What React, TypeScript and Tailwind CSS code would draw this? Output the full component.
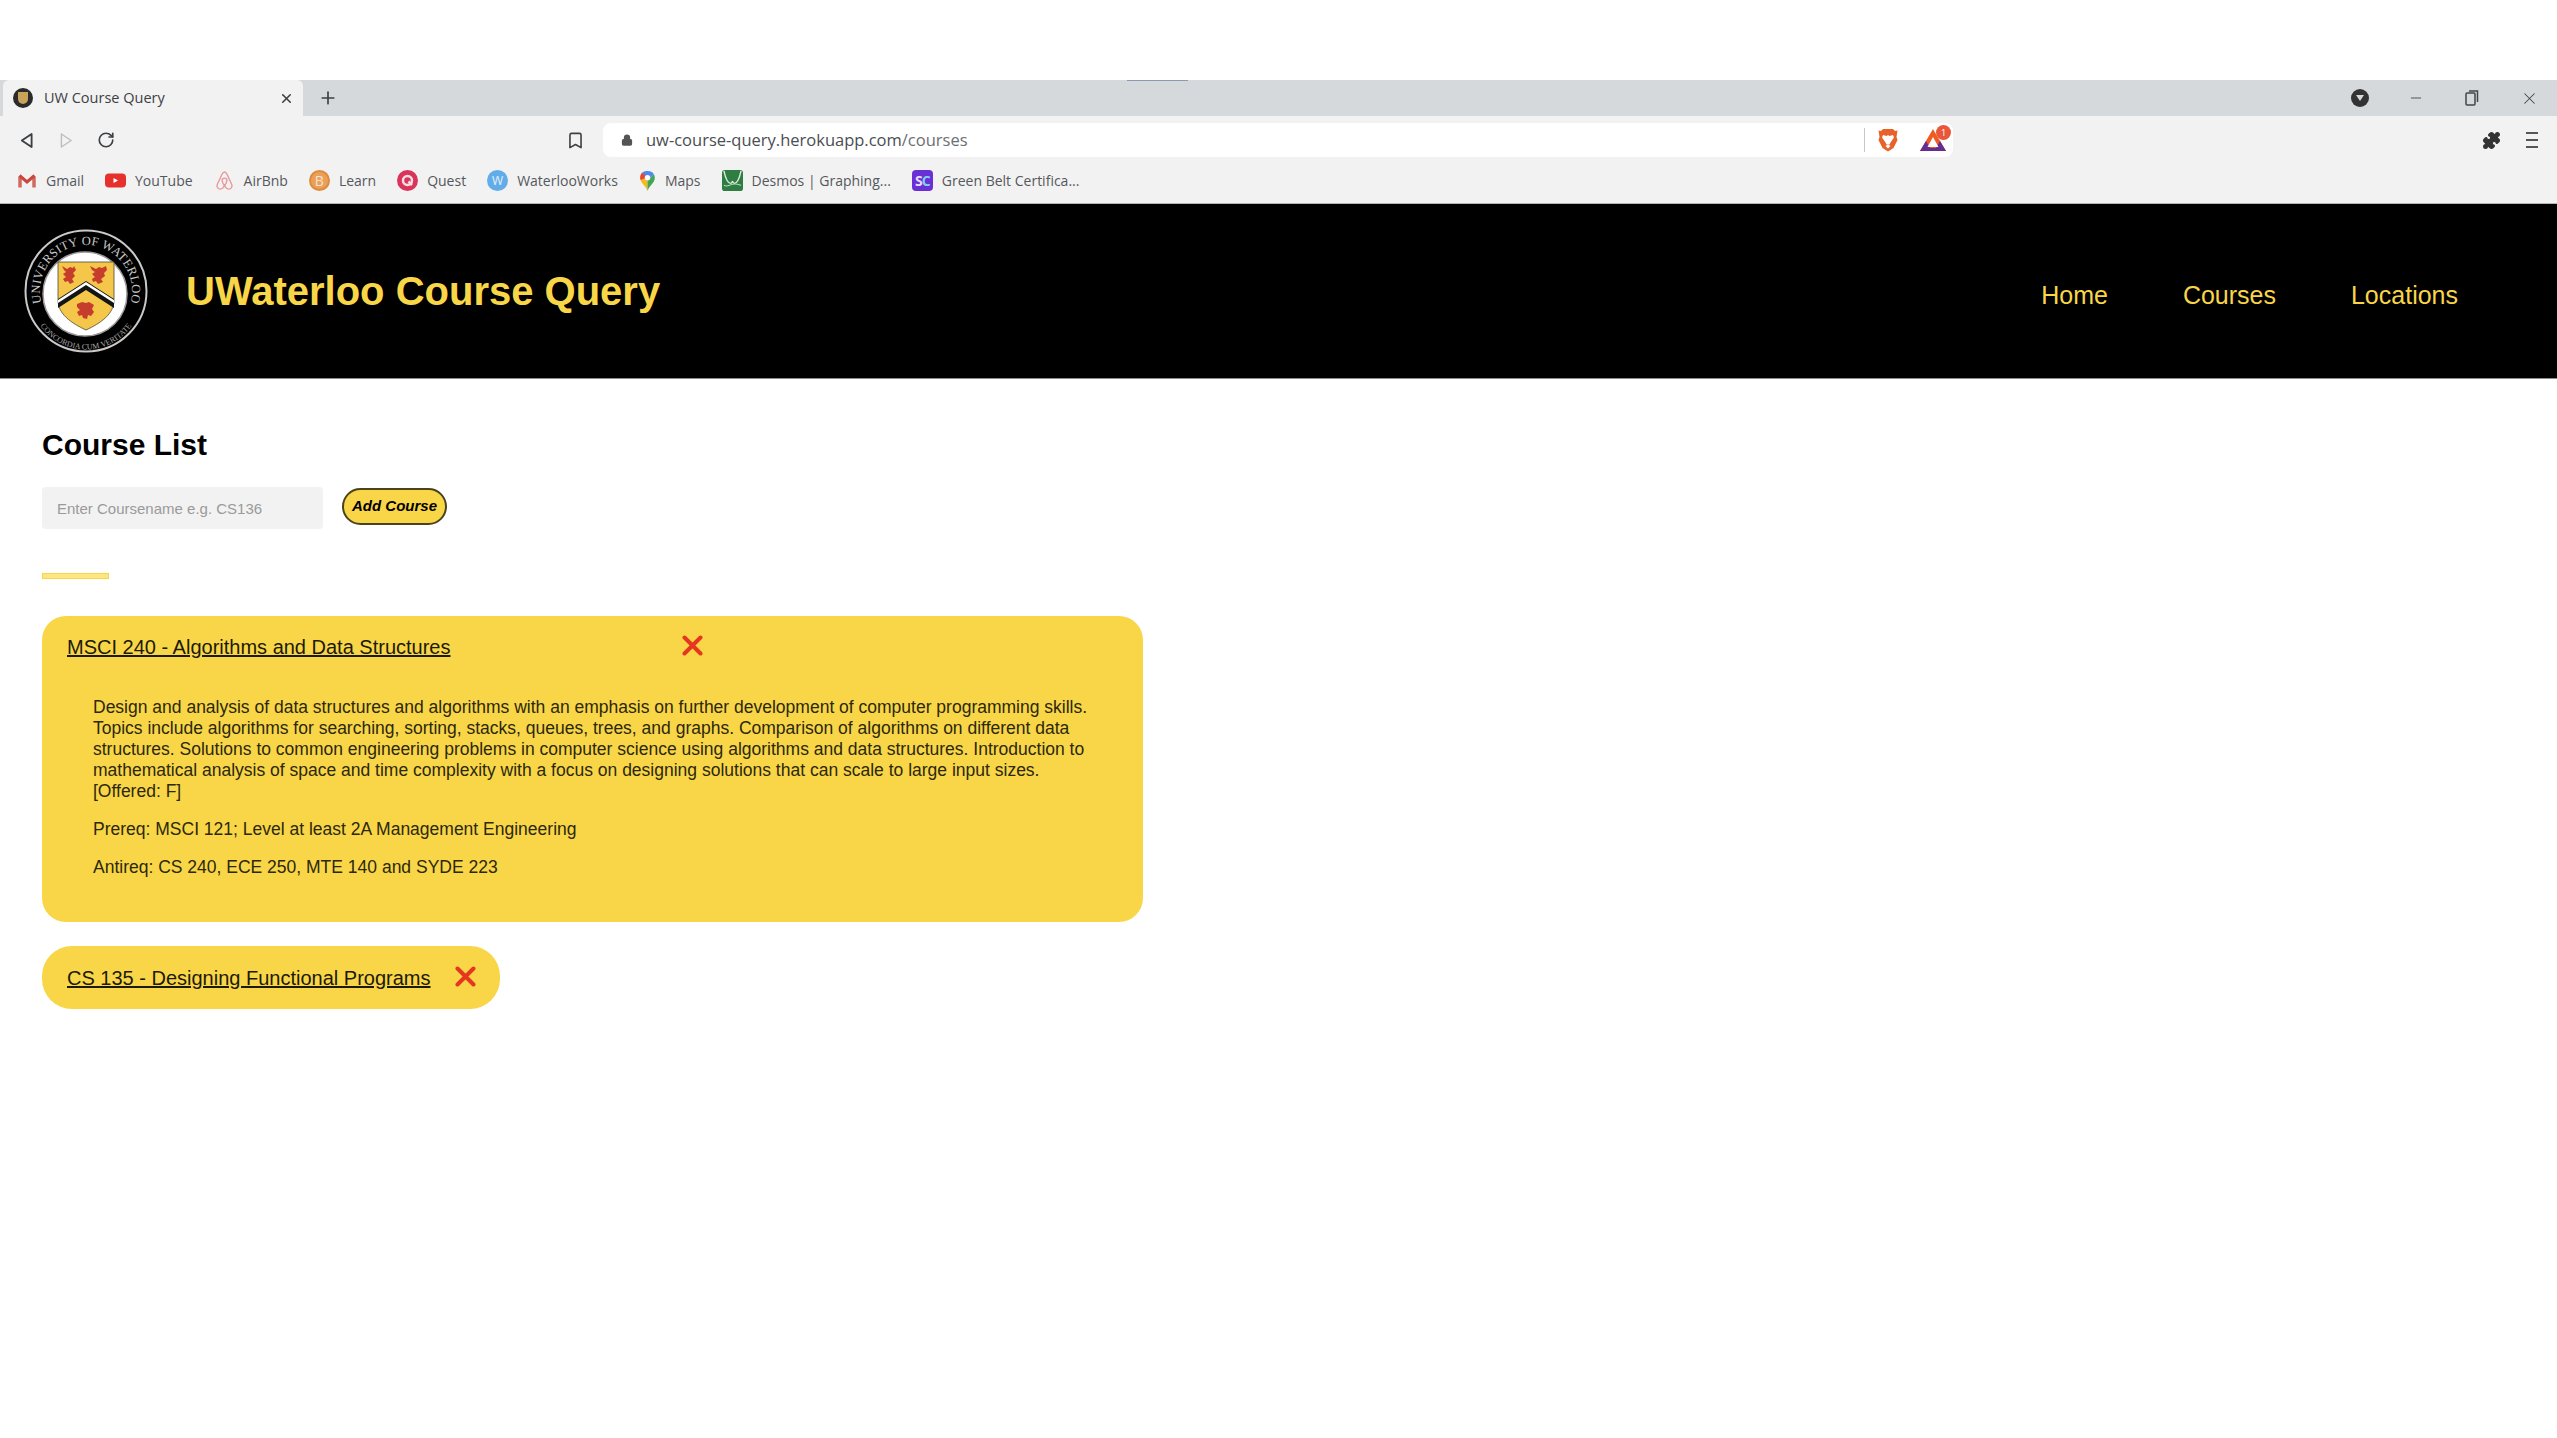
import { Minus, Plus, Puzzle, RotateCw, Bookmark, Lock, X } from "lucide-react";

const sans = "font-['Liberation_Sans',Arial,sans-serif]";
const chrome = "font-['Open_Sans','Noto_Sans',sans-serif]";

const Gmail = () => (
  <svg viewBox="0 0 20 20" className="size-[20px]" fill="none">
    <path d="M3 16.500V5.500" stroke="#cf6a60" strokeWidth="3.500" />
    <path d="M17 16.500V5.500" stroke="#cf6a60" strokeWidth="3.500" />
    <path d="M2.500 4.500l7.500 6.500 7.500-6.500" stroke="#c9473d" strokeWidth="3" />
  </svg>
);

const YouTube = () => (
  <svg viewBox="0 0 21 20" className="size-[21px]">
    <rect x="0" y="3" width="21" height="14" rx="4" fill="#e6302b" />
    <path d="M8.500 7.500l4.500 2.500-4.500 2.500z" fill="#fff" />
  </svg>
);

const Airbnb = () => (
  <svg viewBox="0 0 21 22" className="size-[21px]" fill="none" stroke="#e99a9c" strokeWidth="1.500">
    <path d="M10.500 2c-1.200 0-1.900 1-2.600 2.500L3 15c-1 2.300.3 5 2.900 5 2 0 3.500-1.500 4.600-3.500 1.100 2 2.600 3.500 4.600 3.500 2.600 0 3.900-2.700 2.900-5L13.100 4.500C12.400 3 11.700 2 10.500 2z" />
    <path d="M10.500 16.500C9 14.500 8 12.500 8 11c0-1.500 1-2.500 2.500-2.500S13 9.500 13 11c0 1.500-1 3.500-2.500 5.500z" />
  </svg>
);

const Learn = () => (
  <div className="flex size-[21px] items-center justify-center rounded-full border-[2px] border-[#e08a3a] bg-[#e9a05a] text-[14px] leading-none text-[#fbe3c8]">
    B
  </div>
);

const Quest = () => (
  <svg viewBox="0 0 21 21" className="size-[21px]">
    <circle cx="10.500" cy="10.500" r="10.500" fill="#d9355a" />
    <circle cx="10.500" cy="10.500" r="4.500" fill="none" stroke="#f7dfe4" strokeWidth="2.500" />
    <path d="M11.500 11.500l3.500 3.500" stroke="#f7dfe4" strokeWidth="2.500" />
  </svg>
);

const Works = () => (
  <div className="flex size-[21px] items-center justify-center rounded-full bg-[#62ade9] text-[12px] leading-none text-[#e4f1fb]">
    W
  </div>
);

const Maps = () => (
  <svg viewBox="0 0 18 24" className="h-[22px] w-[17px]">
    <path d="M9 23C7 17 1 14 1 8.500 1 4 4.600 1 9 1z" fill="#f6bb16" />
    <path d="M9 23c2-6 8-9 8-14.500 0-1.400-.4-2.800-1-4L9 12z" fill="#45a554" />
    <path d="M3 3a8 8 0 0 1 6-2 8 8 0 0 1 7 3.500L9 12z" fill="#4b8bf0" />
    <path d="M3 3C1.800 4.500 1 6.400 1 8.500c0 1 .2 1.800.5 2.500L9 8z" fill="#e5473a" />
    <circle cx="9" cy="8.500" r="3" fill="#fff" />
  </svg>
);

const Desmos = () => (
  <svg viewBox="0 0 22 22" className="size-[21px]">
    <rect width="22" height="22" rx="3" fill="#2f7d42" />
    <path d="M2 1c2 9 4 13 7 13 1.500 0 1.500-2 2-2s.5 2 2 2c3 0 5-4 7-13" fill="none" stroke="#d8ecd8" strokeWidth="1.500" />
    <path d="M2 16c3 2 5 0 9-1s6 0 9 1" fill="none" stroke="#b7d9bd" strokeWidth="1.200" />
  </svg>
);

const GreenBelt = () => (
  <div className="flex h-[21px] w-[21px] items-center justify-center rounded-[4px] bg-[#6b2fd6] text-[14px] font-bold leading-none tracking-[-1px] text-[#e3dcfb]">
    <span>S</span>
    <span className="text-[#7fd0ee]">C</span>
  </div>
);

const Brave = () => (
  <svg viewBox="0 0 20 24" className="h-[24px] w-[20px]">
    <path d="M5 1h10l2 2 2.500-.500L18.500 9l1 3-4 8-5.500 3.500L4.500 20l-4-8 1-3L.500 2.500 3 3z" fill="#e8622a" />
    <path d="M5 7l3.500 1L10 7l1.500 1L15 7l1 2.500-3.500 5-1 2h-3l-1-2L4 9.500z" fill="#fff" />
    <path d="M7.500 18l2.500-1.500 2.500 1.500L10 20.500z" fill="#fff" />
  </svg>
);

const Bat = () => (
  <div className="relative h-[26px] w-[28px]">
    <svg viewBox="0 0 28 26" className="size-full">
      <path d="M14 2L1 24h26z" fill="#f15a22" />
      <path d="M1 24l6-10 4 7h6l4-7 6 10z" fill="#662d91" />
      <path d="M14 10l-5.500 10h11z" fill="#fff" />
    </svg>
    <div className="absolute right-[-4px] top-[-2px] flex size-[15px] items-center justify-center rounded-full bg-[#e9573a] text-[9px] leading-none text-white">
      1
    </div>
  </div>
);

const Seal = () => (
  <svg viewBox="0 0 124 124" className="size-[124px] shrink-0">
    <defs>
      <path id="sealTop" d="M25 89.300A46 46 0 1 1 99 89.300" />
      <path id="sealBottom" d="M7 75a56 56 0 0 0 110 0" />
    </defs>
    <circle cx="62" cy="62" r="60.500" fill="#000" stroke="#c9c9c9" strokeWidth="2" />
    <circle cx="61" cy="65" r="42" fill="#fff" stroke="#9a9a9a" strokeWidth="1.500" />
    <text fill="#c8c8c8" fontFamily="Liberation Serif, serif" fontSize="12.500" letterSpacing="0.200">
      <textPath href="#sealTop" startOffset="50%" textAnchor="middle">UNIVERSITY OF WATERLOO</textPath>
    </text>
    <text fill="#a5a5a5" fontFamily="Liberation Serif, serif" fontSize="8">
      <textPath href="#sealBottom" startOffset="50%" textAnchor="middle">CONCORDIA CUM VERITATE</textPath>
    </text>
    <path d="M34 33h56v38c0 14-13 23-28 30-15-7-28-16-28-30z" fill="#f4c64a" stroke="#4a4a35" strokeWidth="0.800" />
    <path d="M38 37l5 3 3-2 3 1 1-2 2 4-3 3 2 3-3 3 2 3-4 2-2-3-3 1-2-3 3-2-3-3 3-2-2-2zM66 37l6 3 3-2 3 1 4-2 1 4-3 3 1 3-4 3 2 3-5 2-2-3-3 1-1-3 3-2-3-3 3-2-3-2zM53 75l5-2 4 1 3-1 5 3-2 4 2 3-3 4-3-1-1 4-4-1-1-3-3 1-2-4 3-2-3-3z" fill="#c63d2c" />
    <path d="M34 70l28-18 28 18v9L62 61 34 79z" fill="#141414" />
    <path d="M34 74l28-18 28 18v-3L62 53 34 71z" fill="#fff" />
  </svg>
);

const CloseMark = ({ className = "" }: { className?: string }) => (
  <svg viewBox="0 0 21 21" className={`size-[21px] shrink-0 ${className}`} fill="none" stroke="#e5371f" strokeWidth="4" strokeLinecap="round">
    <path d="M2.500 2.500l16 16M18.500 2.500l-16 16" />
  </svg>
);

const bookmarks = [
  { label: "Gmail", icon: <Gmail /> },
  { label: "YouTube", icon: <YouTube /> },
  { label: "AirBnb", icon: <Airbnb /> },
  { label: "Learn", icon: <Learn /> },
  { label: "Quest", icon: <Quest /> },
  { label: "WaterlooWorks", icon: <Works /> },
  { label: "Maps", icon: <Maps /> },
  { label: "Desmos | Graphing...", icon: <Desmos /> },
  { label: "Green Belt Certifica...", icon: <GreenBelt /> },
];

const BrowserChrome = () => (
  <div className={chrome}>
    <div className="h-[80px] bg-white" />
    <div className="relative flex h-[36px] items-center bg-[#d6d9dc]">
      <div className="absolute left-[1127px] top-0 h-px w-[61px] bg-[#8b9cb2]" />
      <div className="ml-[3px] flex h-full w-[300px] items-center rounded-t-md bg-[#f2f2f2] pl-[10px] pr-[9px]">
        <div className="flex size-[20px] items-center justify-center rounded-full bg-[#2b2b2b]">
          <div className="h-[12px] w-[10px] rounded-b-full bg-[#c9a35a]" />
        </div>
        <span className="ml-[11px] flex-1 text-[14.500px] text-[#3c4043]">UW Course Query</span>
        <X className="size-[15px] text-[#3c4043]" strokeWidth={2.500} />
      </div>
      <Plus className="ml-[15px] size-[20px] text-[#3c4043]" strokeWidth={2} />
      <div className="ml-auto flex items-center pr-[18px]">
        <div className="flex size-[18px] items-center justify-center rounded-full bg-[#333]">
          <div className="h-0 w-0 border-x-[4px] border-t-[6px] border-x-transparent border-t-[#d6d9dc]" />
        </div>
        <Minus className="ml-[39px] size-[16px] text-[#555]" strokeWidth={1.500} />
        <svg viewBox="0 0 14 16" className="ml-[41px] h-[16px] w-[14px]" fill="none" stroke="#444" strokeWidth="1.500">
          <rect x="1" y="3" width="9" height="12" rx="1" />
          <path d="M4 1h8.500v11" />
        </svg>
        <X className="ml-[41px] size-[19px] text-[#444]" strokeWidth={1.300} />
      </div>
    </div>
    <div className="flex h-[48px] items-center bg-[#f2f2f2]">
      <svg viewBox="0 0 14 18" className="ml-[20px] h-[17px] w-[13px]" fill="none" stroke="#3c4043" strokeWidth="2" strokeLinejoin="round">
        <path d="M12.500 2v14L2 9z" />
      </svg>
      <svg viewBox="0 0 14 18" className="ml-[27px] h-[17px] w-[13px]" fill="none" stroke="#bdbdbd" strokeWidth="1.500" strokeLinejoin="round">
        <path d="M1.500 2v14L12 9z" />
      </svg>
      <RotateCw className="ml-[24px] size-[18px] text-[#3c4043]" strokeWidth={2.200} />
      <Bookmark className="ml-[451px] size-[19px] text-[#3c4043]" strokeWidth={2} />
      <div className="ml-[18px] flex h-[34px] w-[1350px] items-center rounded-lg bg-white pl-[18px]">
        <Lock className="size-[12px] fill-[#555] text-[#555]" strokeWidth={2.500} />
        <span className="ml-[13px] flex-1 text-[16.500px] text-[#4a4d51]">
          uw-course-query.herokuapp.com<span className="text-[#6b6f73]">/courses</span>
        </span>
        <div className="mr-[13px] h-[24px] w-px bg-[#c9c9c9]" />
        <Brave />
        <div className="ml-[21px] mr-[6px]">
          <Bat />
        </div>
      </div>
      <Puzzle className="ml-auto mr-[1px] size-[19px] fill-[#333] text-[#333]" strokeWidth={1.500} />
      <div className="ml-[24px] mr-[19px] flex w-[12px] flex-col gap-[5px]">
        <div className="h-[2px] bg-[#555]" />
        <div className="h-[2px] bg-[#555]" />
        <div className="h-[2px] bg-[#555]" />
      </div>
    </div>
    <div className="flex h-[40px] items-center gap-[21px] border-b border-[#b5b5b5] bg-[#f2f2f2] pb-[6px] pl-[17px] text-[14px] text-[#55585c]">
      {bookmarks.map((b) => (
        <div key={b.label} className="flex items-center gap-[9px]">
          {b.icon}
          <span>{b.label}</span>
        </div>
      ))}
    </div>
  </div>
);

const App = () => {
  return (
    <div className={`min-h-[1438px] bg-white ${sans}`}>
      <BrowserChrome />

      <header className="flex h-[175px] items-center border-b border-[#8a8a8a] bg-black pl-[24px] pr-[99px]">
        <Seal />
        <h1 className="ml-[38px] text-[40px] font-bold text-[#f9d648]">UWaterloo Course Query</h1>
        <nav className="ml-auto flex gap-[75px] pt-[9px] text-[25px] text-[#f9d648]">
          <a>Home</a>
          <a>Courses</a>
          <a>Locations</a>
        </nav>
      </header>

      <main className="px-[42px] pt-[46px]">
        <h2 className="text-[30px] font-bold leading-[40px] text-black">Course List</h2>
        <div className="mt-[22px] flex items-start gap-[19px]">
          <input
            readOnly
            placeholder="Enter Coursename e.g. CS136"
            className="h-[42px] w-[281px] rounded-[4px] bg-[#f2f2f2] px-[15px] text-[15px] placeholder:text-[#9a9a9a]"
          />
          <button className="mt-px h-[37px] w-[105px] rounded-full border-2 border-[#4a431c] bg-[#f9d648] text-[15px] font-bold italic text-black">
            Add Course
          </button>
        </div>
        <div className="mt-[44px] h-[6px] w-[67px] border border-[#f9d648] bg-[#fbe680]" />

        <section className="mt-[37px] h-[306px] w-[1101px] rounded-[24px] bg-[#f9d648] pl-[25px] pt-[14px]">
          <div className="flex items-start">
            <a className="w-[615px] pt-[2px] text-[20px] leading-[30px] text-[#1c1a08] underline">
              MSCI 240 - Algorithms and Data Structures
            </a>
            <CloseMark className="mt-[5px]" />
          </div>
          <div className="mt-[35px] w-[1028px] pl-[26px] text-[17.500px] leading-[21px] text-[#2c280c]">
            <p>
              Design and analysis of data structures and algorithms with an emphasis on further development of computer programming skills.
              Topics include algorithms for searching, sorting, stacks, queues, trees, and graphs. Comparison of algorithms on different data
              structures. Solutions to common engineering problems in computer science using algorithms and data structures. Introduction to
              mathematical analysis of space and time complexity with a focus on designing solutions that can scale to large input sizes.
              [Offered: F]
            </p>
            <p className="mt-[17px]">Prereq: MSCI 121; Level at least 2A Management Engineering</p>
            <p className="mt-[17px]">Antireq: CS 240, ECE 250, MTE 140 and SYDE 223</p>
          </div>
        </section>

        <section className="mt-[24px] flex h-[63px] w-[458px] items-center rounded-[30px] bg-[#f9d648] pl-[25px]">
          <a className="w-[388px] text-[20px] text-[#1c1a08] underline">CS 135 - Designing Functional Programs</a>
          <CloseMark className="mb-[3px]" />
        </section>
      </main>
    </div>
  );
};

export default App;
